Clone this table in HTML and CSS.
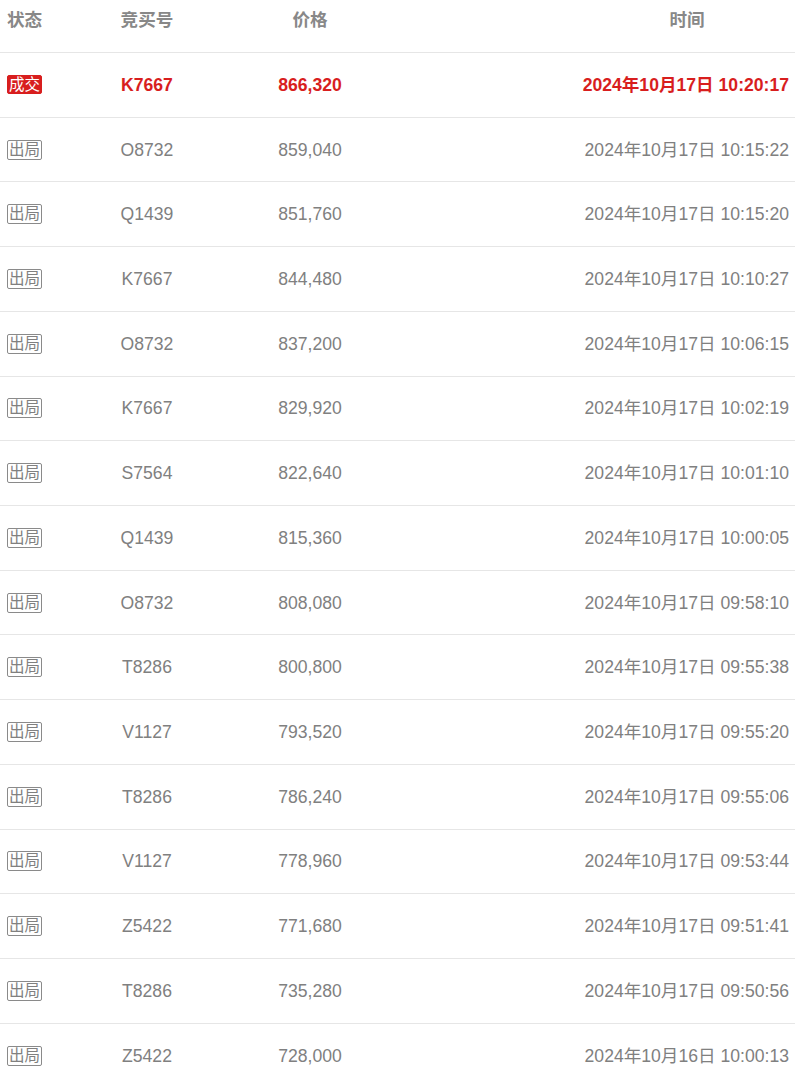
FILE: index.html
```html
<!DOCTYPE html>
<html lang="zh-CN">
<head>
<meta charset="UTF-8">
<meta name="viewport" content="width=device-width, initial-scale=1.0">
<title>竞买记录</title>
<link rel="stylesheet" href="styles.css">
</head>
<body>
<div class="records">
    <div class="row head">
        <div class="cell">状态</div>
        <div class="cell">竞买号</div>
        <div class="cell">价格</div>
        <div class="cell time"><span class="time-label">时间</span></div>
    </div>
    <div class="row deal">
        <div class="cell"><span class="tag tag-deal">成交</span></div>
        <div class="cell">K7667</div>
        <div class="cell">866,320</div>
        <div class="cell time">2024年10月17日 10:20:17</div>
    </div>
    <div class="row">
        <div class="cell"><span class="tag">出局</span></div>
        <div class="cell">O8732</div>
        <div class="cell">859,040</div>
        <div class="cell time">2024年10月17日 10:15:22</div>
    </div>
    <div class="row">
        <div class="cell"><span class="tag">出局</span></div>
        <div class="cell">Q1439</div>
        <div class="cell">851,760</div>
        <div class="cell time">2024年10月17日 10:15:20</div>
    </div>
    <div class="row">
        <div class="cell"><span class="tag">出局</span></div>
        <div class="cell">K7667</div>
        <div class="cell">844,480</div>
        <div class="cell time">2024年10月17日 10:10:27</div>
    </div>
    <div class="row">
        <div class="cell"><span class="tag">出局</span></div>
        <div class="cell">O8732</div>
        <div class="cell">837,200</div>
        <div class="cell time">2024年10月17日 10:06:15</div>
    </div>
    <div class="row">
        <div class="cell"><span class="tag">出局</span></div>
        <div class="cell">K7667</div>
        <div class="cell">829,920</div>
        <div class="cell time">2024年10月17日 10:02:19</div>
    </div>
    <div class="row">
        <div class="cell"><span class="tag">出局</span></div>
        <div class="cell">S7564</div>
        <div class="cell">822,640</div>
        <div class="cell time">2024年10月17日 10:01:10</div>
    </div>
    <div class="row">
        <div class="cell"><span class="tag">出局</span></div>
        <div class="cell">Q1439</div>
        <div class="cell">815,360</div>
        <div class="cell time">2024年10月17日 10:00:05</div>
    </div>
    <div class="row">
        <div class="cell"><span class="tag">出局</span></div>
        <div class="cell">O8732</div>
        <div class="cell">808,080</div>
        <div class="cell time">2024年10月17日 09:58:10</div>
    </div>
    <div class="row">
        <div class="cell"><span class="tag">出局</span></div>
        <div class="cell">T8286</div>
        <div class="cell">800,800</div>
        <div class="cell time">2024年10月17日 09:55:38</div>
    </div>
    <div class="row">
        <div class="cell"><span class="tag">出局</span></div>
        <div class="cell">V1127</div>
        <div class="cell">793,520</div>
        <div class="cell time">2024年10月17日 09:55:20</div>
    </div>
    <div class="row">
        <div class="cell"><span class="tag">出局</span></div>
        <div class="cell">T8286</div>
        <div class="cell">786,240</div>
        <div class="cell time">2024年10月17日 09:55:06</div>
    </div>
    <div class="row">
        <div class="cell"><span class="tag">出局</span></div>
        <div class="cell">V1127</div>
        <div class="cell">778,960</div>
        <div class="cell time">2024年10月17日 09:53:44</div>
    </div>
    <div class="row">
        <div class="cell"><span class="tag">出局</span></div>
        <div class="cell">Z5422</div>
        <div class="cell">771,680</div>
        <div class="cell time">2024年10月17日 09:51:41</div>
    </div>
    <div class="row">
        <div class="cell"><span class="tag">出局</span></div>
        <div class="cell">T8286</div>
        <div class="cell">735,280</div>
        <div class="cell time">2024年10月17日 09:50:56</div>
    </div>
    <div class="row">
        <div class="cell"><span class="tag">出局</span></div>
        <div class="cell">Z5422</div>
        <div class="cell">728,000</div>
        <div class="cell time">2024年10月16日 10:00:13</div>
    </div>
</div>
</body>
</html>
```

FILE: styles.css
```css
body, html {
    margin: 0;
    padding: 0;
    background: #fff;
    font-family: "Liberation Sans", Arial, "Noto Sans CJK SC", sans-serif;
    font-size: 17.6px;
    color: #808080;
}
.records {
    width: 795px;
    overflow: hidden;
}
.row {
    display: grid;
    grid-template-columns: 49px 196px 130px 1fr;
    align-items: center;
    height: 63.73px;
    border-bottom: 1px solid #e6e6e6;
}
.row.head {
    height: 52px;
    align-items: start;
    font-weight: bold;
    color: #888;
}
.row.head .cell {
    padding-top: 10px;
}
.cell {
    text-align: center;
    white-space: nowrap;
    line-height: 20px;
    height: 20px;
}
.cell.time {
    text-align: right;
    padding-right: 6px;
}
.time-label {
    display: inline-block;
    width: 204px;
    text-align: center;
}
.row.deal {
    color: #d81e1e;
    font-weight: bold;
}
.tag {
    display: inline-block;
    box-sizing: border-box;
    width: 35px;
    height: 20px;
    line-height: 18px;
    font-size: 15.5px;
    font-weight: normal;
    border: 1px solid #8a8a8a;
    border-radius: 2px;
    color: #808080;
    vertical-align: top;
    overflow: hidden;
}
.tag-deal {
    height: 19px;
    line-height: 17px;
    background: #d81e1e;
    border-color: #d81e1e;
    color: #fff;
}
```
